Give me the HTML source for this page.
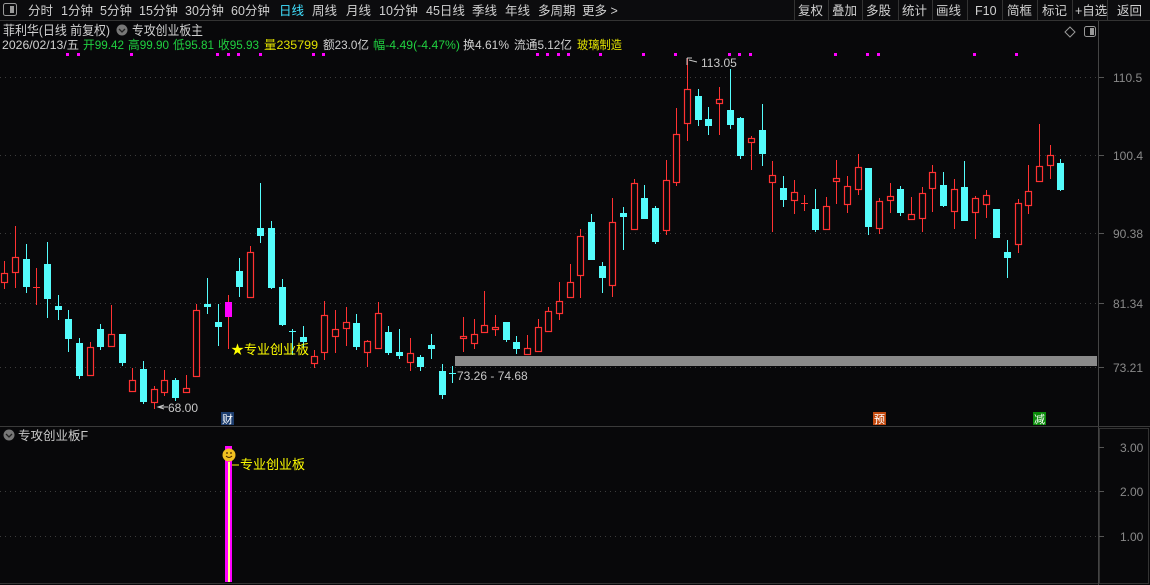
<!DOCTYPE html>
<html><head><meta charset="utf-8"><style>
html,body{margin:0;padding:0;background:#08080a;}
body{width:1150px;height:585px;overflow:hidden;position:relative;font-family:"Liberation Sans","Noto Sans CJK SC",sans-serif;}
</style></head><body>
<svg width="1150" height="585" style="position:absolute;left:0;top:0" xmlns="http://www.w3.org/2000/svg" font-family="Liberation Sans, Noto Sans CJK SC, sans-serif">
<rect x="0" y="0" width="1150" height="20" fill="#0c0c0e"/>
<line x1="0" y1="20.5" x2="1150" y2="20.5" stroke="#333"/>
<rect x="3.5" y="3.5" width="13" height="12" fill="none" stroke="#999" rx="2"/>
<rect x="10" y="6" width="4" height="7" fill="#999"/>
<g stroke="#333">
<line x1="794.5" y1="0" x2="794.5" y2="20"/><line x1="828.5" y1="0" x2="828.5" y2="20"/><line x1="862.5" y1="0" x2="862.5" y2="20"/><line x1="898.5" y1="0" x2="898.5" y2="20"/><line x1="932.5" y1="0" x2="932.5" y2="20"/><line x1="967.5" y1="0" x2="967.5" y2="20"/><line x1="1002.5" y1="0" x2="1002.5" y2="20"/><line x1="1037.5" y1="0" x2="1037.5" y2="20"/><line x1="1072.5" y1="0" x2="1072.5" y2="20"/><line x1="1107.5" y1="0" x2="1107.5" y2="20"/>
</g>
<g font-size="12.5" fill="#d0d0d0">
<text x="28" y="15">分时</text><text x="61" y="15">1分钟</text><text x="100" y="15">5分钟</text><text x="139" y="15">15分钟</text><text x="185" y="15">30分钟</text><text x="231" y="15">60分钟</text><text x="279" y="15" fill="#40e0ff">日线</text><text x="312" y="15">周线</text><text x="346" y="15">月线</text><text x="379" y="15">10分钟</text><text x="426" y="15">45日线</text><text x="472" y="15">季线</text><text x="505" y="15">年线</text><text x="538" y="15">多周期</text><text x="582" y="15">更多 &gt;</text>
<text x="798" y="15">复权</text><text x="832" y="15">叠加</text><text x="866" y="15">多股</text><text x="902" y="15">统计</text><text x="936" y="15">画线</text><text x="975" y="15">F10</text><text x="1007" y="15">简框</text><text x="1042" y="15">标记</text><text x="1075" y="15">+自选</text><text x="1117" y="15">返回</text>
</g>
<g font-size="13" fill="#d0d0d0">
<text x="3" y="35" textLength="107" lengthAdjust="spacingAndGlyphs">菲利华(日线 前复权)</text>
<text x="132" y="35" textLength="71" lengthAdjust="spacingAndGlyphs">专攻创业板主</text>
</g>
<circle cx="122" cy="30" r="5.5" fill="#777"/><path d="M119 29 L122 32 L125 29" stroke="#222" fill="none" stroke-width="1.3"/>
<g font-size="12">
<text x="2" y="49" fill="#d0d0d0" textLength="77" lengthAdjust="spacingAndGlyphs">2026/02/13/五</text>
<text x="83" y="49" fill="#20d040" textLength="41" lengthAdjust="spacingAndGlyphs">开99.42</text>
<text x="128" y="49" fill="#20d040" textLength="41" lengthAdjust="spacingAndGlyphs">高99.90</text>
<text x="173" y="49" fill="#20d040" textLength="41" lengthAdjust="spacingAndGlyphs">低95.81</text>
<text x="218" y="49" fill="#20d040" textLength="41" lengthAdjust="spacingAndGlyphs">收95.93</text>
<text x="264" y="49" fill="#e0e000" textLength="54" lengthAdjust="spacingAndGlyphs">量235799</text>
<text x="323" y="49" fill="#d0d0d0" textLength="46" lengthAdjust="spacingAndGlyphs">额23.0亿</text>
<text x="373" y="49" fill="#20d040" textLength="87" lengthAdjust="spacingAndGlyphs">幅-4.49(-4.47%)</text>
<text x="463" y="49" fill="#d0d0d0" textLength="46" lengthAdjust="spacingAndGlyphs">换4.61%</text>
<text x="514" y="49" fill="#d0d0d0" textLength="58" lengthAdjust="spacingAndGlyphs">流通5.12亿</text>
<text x="577" y="49" fill="#e0e000" textLength="45" lengthAdjust="spacingAndGlyphs">玻璃制造</text>
</g>
<line x1="1098.5" y1="21" x2="1098.5" y2="585" stroke="#444"/>
<line x1="0" y1="426.5" x2="1150" y2="426.5" stroke="#3a3a3a"/>
<rect x="1099.5" y="428.5" width="49" height="155" fill="none" stroke="#333"/>
<line x1="0" y1="583.5" x2="1098" y2="583.5" stroke="#333"/>
<g stroke="#3c3c3c" stroke-dasharray="1,4">
<line x1="0" y1="77.5" x2="1097" y2="77.5"/><line x1="0" y1="155.5" x2="1097" y2="155.5"/><line x1="0" y1="233.5" x2="1097" y2="233.5"/><line x1="0" y1="303.5" x2="1097" y2="303.5"/><line x1="0" y1="367.5" x2="1097" y2="367.5"/>
<line x1="0" y1="491.5" x2="1097" y2="491.5"/><line x1="0" y1="536.5" x2="1097" y2="536.5"/>
</g>
<g stroke="#555"><line x1="1099" y1="77.5" x2="1104" y2="77.5"/><line x1="1099" y1="155.5" x2="1104" y2="155.5"/><line x1="1099" y1="233.5" x2="1104" y2="233.5"/><line x1="1099" y1="303.5" x2="1104" y2="303.5"/><line x1="1099" y1="367.5" x2="1104" y2="367.5"/><line x1="1099" y1="447.5" x2="1104" y2="447.5"/><line x1="1099" y1="491.5" x2="1104" y2="491.5"/><line x1="1099" y1="536.5" x2="1104" y2="536.5"/></g>
<g font-size="12" fill="#8a8a8a">
<text x="1113" y="82">110.5</text><text x="1113" y="160">100.4</text><text x="1113" y="238">90.38</text><text x="1113" y="308">81.34</text><text x="1113" y="372">73.21</text>
<text x="1120" y="452">3.00</text><text x="1120" y="496">2.00</text><text x="1120" y="541">1.00</text>
</g>
<path d="M1070 27 L1075 32 L1070 37 L1065 32 Z" fill="none" stroke="#999"/>
<rect x="1084.5" y="26.5" width="11" height="10" rx="2" fill="none" stroke="#999"/>
<rect x="1090" y="28" width="4" height="7" fill="#999"/>
<circle cx="9" cy="435" r="5.5" fill="#777"/><path d="M6 434 L9 437 L12 434" stroke="#222" fill="none" stroke-width="1.3"/>
<g fill="#ff00ff">
<rect x="66" y="53" width="3" height="3"/><rect x="77" y="53" width="3" height="3"/><rect x="130" y="53" width="3" height="3"/><rect x="216" y="53" width="3" height="3"/><rect x="227" y="53" width="3" height="3"/><rect x="237" y="53" width="3" height="3"/><rect x="259" y="53" width="3" height="3"/><rect x="312" y="53" width="3" height="3"/><rect x="322" y="53" width="3" height="3"/><rect x="536" y="53" width="3" height="3"/><rect x="546" y="53" width="3" height="3"/><rect x="557" y="53" width="3" height="3"/><rect x="567" y="53" width="3" height="3"/><rect x="599" y="53" width="3" height="3"/><rect x="642" y="53" width="3" height="3"/><rect x="674" y="53" width="3" height="3"/><rect x="728" y="53" width="3" height="3"/><rect x="738" y="53" width="3" height="3"/><rect x="749" y="53" width="3" height="3"/><rect x="834" y="53" width="3" height="3"/><rect x="866" y="53" width="3" height="3"/><rect x="877" y="53" width="3" height="3"/><rect x="973" y="53" width="3" height="3"/><rect x="1015" y="53" width="3" height="3"/>
</g>
<rect x="455" y="356" width="642" height="10" fill="#8a8a8a"/>
<g fill="#ff3232">
<rect x="4" y="261" width="1" height="28"/><rect x="15" y="226" width="1" height="62"/><rect x="36" y="268" width="1" height="37"/><rect x="90" y="342" width="1" height="34"/><rect x="111" y="305" width="1" height="42"/><rect x="132" y="368" width="1" height="24"/><rect x="154" y="386" width="1" height="23"/><rect x="164" y="370" width="1" height="26"/><rect x="186" y="375" width="1" height="18"/><rect x="196" y="304" width="1" height="73"/><rect x="228" y="295" width="1" height="54"/><rect x="250" y="246" width="1" height="52"/>
<rect x="314" y="350" width="1" height="18"/><rect x="324" y="301" width="1" height="59"/><rect x="335" y="310" width="1" height="43"/><rect x="346" y="307" width="1" height="39"/><rect x="367" y="340" width="1" height="27"/><rect x="378" y="302" width="1" height="47"/><rect x="410" y="338" width="1" height="33"/><rect x="463" y="317" width="1" height="35"/><rect x="474" y="319" width="1" height="30"/><rect x="484" y="291" width="1" height="42"/><rect x="495" y="315" width="1" height="21"/><rect x="527" y="335" width="1" height="20"/><rect x="538" y="319" width="1" height="33"/><rect x="548" y="307" width="1" height="25"/><rect x="559" y="282" width="1" height="38"/><rect x="570" y="264" width="1" height="34"/><rect x="580" y="229" width="1" height="69"/>
<rect x="612" y="198" width="1" height="99"/><rect x="634" y="179" width="1" height="51"/><rect x="666" y="160" width="1" height="75"/><rect x="676" y="108" width="1" height="78"/><rect x="687" y="58" width="1" height="83"/><rect x="719" y="87" width="1" height="48"/><rect x="751" y="136" width="1" height="34"/><rect x="772" y="161" width="1" height="71"/><rect x="794" y="180" width="1" height="34"/><rect x="804" y="195" width="1" height="16"/><rect x="826" y="197" width="1" height="33"/><rect x="836" y="160" width="1" height="44"/><rect x="847" y="176" width="1" height="37"/><rect x="858" y="154" width="1" height="41"/><rect x="879" y="198" width="1" height="36"/><rect x="890" y="183" width="1" height="30"/><rect x="911" y="197" width="1" height="23"/><rect x="922" y="187" width="1" height="45"/><rect x="932" y="165" width="1" height="47"/><rect x="954" y="179" width="1" height="50"/><rect x="975" y="196" width="1" height="43"/><rect x="986" y="190" width="1" height="28"/><rect x="1018" y="199" width="1" height="54"/><rect x="1028" y="165" width="1" height="49"/><rect x="1039" y="124" width="1" height="58"/><rect x="1050" y="145" width="1" height="34"/>
</g>
<g fill="#08080a" stroke="#ff3232" stroke-width="1.2">
<rect x="1.5" y="273.5" width="6" height="9"/><rect x="12.5" y="257.5" width="6" height="15"/><rect x="87.5" y="347.5" width="6" height="28"/><rect x="108.5" y="334.5" width="6" height="12"/><rect x="129.5" y="380.5" width="6" height="11"/><rect x="151.5" y="389.5" width="6" height="13"/><rect x="161.5" y="380.5" width="6" height="12"/><rect x="183.5" y="388.5" width="6" height="4"/><rect x="193.5" y="310.5" width="6" height="66"/><rect x="247.5" y="252.5" width="6" height="45"/>
<rect x="311.5" y="356.5" width="6" height="7"/><rect x="321.5" y="315.5" width="6" height="37"/><rect x="332.5" y="329.5" width="6" height="7"/><rect x="343.5" y="322.5" width="6" height="6"/><rect x="364.5" y="341.5" width="6" height="11"/><rect x="375.5" y="313.5" width="6" height="35"/><rect x="407.5" y="353.5" width="6" height="9"/><rect x="460.5" y="336.5" width="6" height="2"/><rect x="471.5" y="334.5" width="6" height="9"/><rect x="481.5" y="325.5" width="6" height="7"/><rect x="492.5" y="327.5" width="6" height="2"/><rect x="524.5" y="348.5" width="6" height="6"/><rect x="535.5" y="327.5" width="6" height="24"/><rect x="545.5" y="311.5" width="6" height="20"/><rect x="556.5" y="301.5" width="6" height="12"/><rect x="567.5" y="282.5" width="6" height="15"/><rect x="577.5" y="236.5" width="6" height="39"/>
<rect x="609.5" y="222.5" width="6" height="63"/><rect x="631.5" y="183.5" width="6" height="46"/><rect x="663.5" y="180.5" width="6" height="50"/><rect x="673.5" y="134.5" width="6" height="48"/><rect x="684.5" y="89.5" width="6" height="34"/><rect x="716.5" y="99.5" width="6" height="4"/><rect x="748.5" y="138.5" width="6" height="4"/><rect x="769.5" y="175.5" width="6" height="7"/><rect x="791.5" y="192.5" width="6" height="8"/><rect x="823.5" y="206.5" width="6" height="23"/><rect x="833.5" y="178.5" width="6" height="3"/><rect x="844.5" y="186.5" width="6" height="18"/><rect x="855.5" y="167.5" width="6" height="22"/><rect x="876.5" y="201.5" width="6" height="27"/><rect x="887.5" y="196.5" width="6" height="4"/><rect x="908.5" y="214.5" width="6" height="5"/><rect x="919.5" y="193.5" width="6" height="25"/><rect x="929.5" y="172.5" width="6" height="16"/><rect x="951.5" y="189.5" width="6" height="22"/><rect x="972.5" y="198.5" width="6" height="14"/><rect x="983.5" y="195.5" width="6" height="9"/><rect x="1015.5" y="203.5" width="6" height="41"/><rect x="1025.5" y="191.5" width="6" height="14"/><rect x="1036.5" y="166.5" width="6" height="15"/><rect x="1047.5" y="155.5" width="6" height="10"/>
</g>
<g fill="#ff3232"><rect x="33" y="287" width="7" height="1"/><rect x="801" y="203" width="7" height="1"/></g>
<rect x="225" y="302" width="7" height="15" fill="#ff00ff"/>
<g fill="#54fcfc">
<rect x="26" y="244" width="1" height="49"/><rect x="23" y="259" width="7" height="28"/>
<rect x="47" y="242" width="1" height="76"/><rect x="44" y="264" width="7" height="35"/>
<rect x="58" y="295" width="1" height="25"/><rect x="55" y="306" width="7" height="4"/>
<rect x="68" y="310" width="1" height="42"/><rect x="65" y="319" width="7" height="20"/>
<rect x="79" y="338" width="1" height="41"/><rect x="76" y="343" width="7" height="33"/>
<rect x="100" y="324" width="1" height="26"/><rect x="97" y="329" width="7" height="18"/>
<rect x="122" y="334" width="1" height="32"/><rect x="119" y="334" width="7" height="29"/>
<rect x="143" y="361" width="1" height="43"/><rect x="140" y="369" width="7" height="33"/>
<rect x="175" y="378" width="1" height="23"/><rect x="172" y="380" width="7" height="18"/>
<rect x="207" y="278" width="1" height="36"/><rect x="204" y="304" width="7" height="3"/>
<rect x="218" y="304" width="1" height="42"/><rect x="215" y="322" width="7" height="5"/>
<rect x="239" y="258" width="1" height="39"/><rect x="236" y="271" width="7" height="16"/>
<rect x="260" y="183" width="1" height="60"/><rect x="257" y="228" width="7" height="8"/>
<rect x="271" y="221" width="1" height="68"/><rect x="268" y="228" width="7" height="60"/>
<rect x="282" y="279" width="1" height="47"/><rect x="279" y="287" width="7" height="38"/>
<rect x="292" y="329" width="1" height="26"/><rect x="289" y="331" width="7" height="1"/>
<rect x="303" y="326" width="1" height="21"/><rect x="300" y="337" width="7" height="5"/>
<rect x="356" y="314" width="1" height="36"/><rect x="353" y="323" width="7" height="24"/>
<rect x="388" y="326" width="1" height="29"/><rect x="385" y="332" width="7" height="21"/>
<rect x="399" y="329" width="1" height="30"/><rect x="396" y="352" width="7" height="4"/>
<rect x="420" y="355" width="1" height="16"/><rect x="417" y="357" width="7" height="10"/>
<rect x="431" y="334" width="1" height="25"/><rect x="428" y="345" width="7" height="4"/>
<rect x="442" y="364" width="1" height="35"/><rect x="439" y="371" width="7" height="24"/>
<rect x="452" y="366" width="1" height="17"/><rect x="449" y="373" width="7" height="1"/>
<rect x="506" y="322" width="1" height="20"/><rect x="503" y="322" width="7" height="18"/>
<rect x="516" y="336" width="1" height="18"/><rect x="513" y="342" width="7" height="7"/>
<rect x="591" y="214" width="1" height="46"/><rect x="588" y="222" width="7" height="38"/>
<rect x="602" y="262" width="1" height="31"/><rect x="599" y="266" width="7" height="12"/>
<rect x="623" y="207" width="1" height="43"/><rect x="620" y="213" width="7" height="4"/>
<rect x="644" y="185" width="1" height="34"/><rect x="641" y="198" width="7" height="21"/>
<rect x="655" y="206" width="1" height="38"/><rect x="652" y="208" width="7" height="34"/>
<rect x="698" y="89" width="1" height="37"/><rect x="695" y="96" width="7" height="24"/>
<rect x="708" y="107" width="1" height="28"/><rect x="705" y="119" width="7" height="7"/>
<rect x="730" y="69" width="1" height="60"/><rect x="727" y="110" width="7" height="15"/>
<rect x="740" y="117" width="1" height="42"/><rect x="737" y="118" width="7" height="38"/>
<rect x="762" y="104" width="1" height="62"/><rect x="759" y="130" width="7" height="24"/>
<rect x="783" y="176" width="1" height="31"/><rect x="780" y="188" width="7" height="12"/>
<rect x="815" y="189" width="1" height="43"/><rect x="812" y="209" width="7" height="21"/>
<rect x="868" y="168" width="1" height="67"/><rect x="865" y="168" width="7" height="59"/>
<rect x="900" y="186" width="1" height="30"/><rect x="897" y="189" width="7" height="24"/>
<rect x="943" y="172" width="1" height="35"/><rect x="940" y="185" width="7" height="21"/>
<rect x="964" y="161" width="1" height="60"/><rect x="961" y="187" width="7" height="34"/>
<rect x="993" y="209" width="7" height="29"/>
<rect x="1007" y="240" width="1" height="38"/><rect x="1004" y="252" width="7" height="6"/>
<rect x="1060" y="159" width="1" height="32"/><rect x="1057" y="163" width="7" height="27"/>
</g>
<path d="M164 405 L158 407 L164 409 M158 407 L168 407" stroke="#c8c8c8" fill="none"/>
<path d="M687 58 L687 65 M687 58 L692 58 M689 60 L697 62" stroke="#c8c8c8" fill="none"/>
<g font-size="12" fill="#c8c8c8">
<text x="168" y="412">68.00</text>
<text x="701" y="67">113.05</text>
<text x="457" y="380">73.26 - 74.68</text>
</g>
<text x="231" y="354" font-size="13" fill="#ffff00">★专业创业板</text>
<rect x="221" y="412" width="13" height="13" fill="#1c3d6e"/><text x="222" y="423" font-size="11" fill="#fff">财</text>
<rect x="873" y="412" width="13" height="13" fill="#c24a10"/><text x="874" y="423" font-size="11" fill="#fff">预</text>
<rect x="1033" y="412" width="13" height="13" fill="#0a8a0a"/><text x="1034" y="423" font-size="11" fill="#fff">减</text>
<text x="18" y="440" font-size="12.5" fill="#c8c8c8">专攻创业板F</text>
<rect x="225" y="446" width="7" height="136" fill="#ff00ff"/>
<rect x="228" y="462" width="2" height="120" fill="#ffff80"/>
<circle cx="229" cy="455" r="6.5" fill="#f0c020"/>
<circle cx="227" cy="453" r="0.9" fill="#402000"/><circle cx="231" cy="453" r="0.9" fill="#402000"/>
<path d="M226 456 Q229 459 232 456" stroke="#402000" fill="none"/>
<path d="M232 465 L239 465" stroke="#ffff00"/>
<text x="240" y="469" font-size="13" fill="#ffff00">专业创业板</text>
</svg>
</body></html>
